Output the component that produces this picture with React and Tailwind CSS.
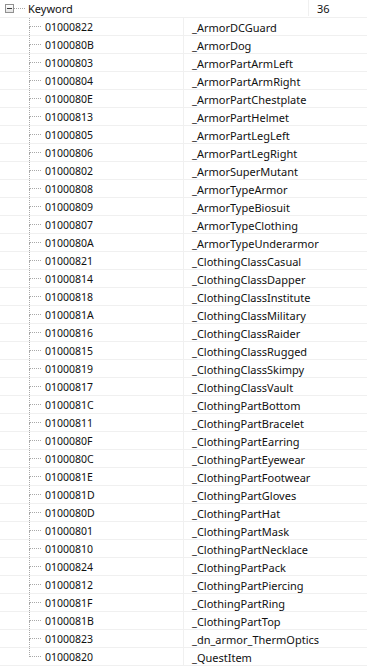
import React from 'react';

const KEYWORDS = [
  ['01000822', '_ArmorDCGuard'],
  ['0100080B', '_ArmorDog'],
  ['01000803', '_ArmorPartArmLeft'],
  ['01000804', '_ArmorPartArmRight'],
  ['0100080E', '_ArmorPartChestplate'],
  ['01000813', '_ArmorPartHelmet'],
  ['01000805', '_ArmorPartLegLeft'],
  ['01000806', '_ArmorPartLegRight'],
  ['01000802', '_ArmorSuperMutant'],
  ['01000808', '_ArmorTypeArmor'],
  ['01000809', '_ArmorTypeBiosuit'],
  ['01000807', '_ArmorTypeClothing'],
  ['0100080A', '_ArmorTypeUnderarmor'],
  ['01000821', '_ClothingClassCasual'],
  ['01000814', '_ClothingClassDapper'],
  ['01000818', '_ClothingClassInstitute'],
  ['0100081A', '_ClothingClassMilitary'],
  ['01000816', '_ClothingClassRaider'],
  ['01000815', '_ClothingClassRugged'],
  ['01000819', '_ClothingClassSkimpy'],
  ['01000817', '_ClothingClassVault'],
  ['0100081C', '_ClothingPartBottom'],
  ['01000811', '_ClothingPartBracelet'],
  ['0100080F', '_ClothingPartEarring'],
  ['0100080C', '_ClothingPartEyewear'],
  ['0100081E', '_ClothingPartFootwear'],
  ['0100081D', '_ClothingPartGloves'],
  ['0100080D', '_ClothingPartHat'],
  ['01000801', '_ClothingPartMask'],
  ['01000810', '_ClothingPartNecklace'],
  ['01000824', '_ClothingPartPack'],
  ['01000812', '_ClothingPartPiercing'],
  ['0100081F', '_ClothingPartRing'],
  ['0100081B', '_ClothingPartTop'],
  ['01000823', '_dn_armor_ThermOptics'],
  ['01000820', '_QuestItem'],
];

function Row({ id, name, last }) {
  return (
    <div className="flex h-[18px] border-b border-[#f0f0f0]">
      <div className="w-[29px] shrink-0" />
      {/* tree connector */}
      <div className="w-[12px] shrink-0 flex flex-col">
        <div className="h-[9px] border-l border-b border-dotted border-[#a8a8a8]" />
        {!last && <div className="flex-1 border-l border-dotted border-[#a8a8a8]" />}
      </div>
      <div className="w-[142px] shrink-0 pl-[4px] pt-[2px] flex items-center text-[10.5px]">{id}</div>
      <div className="flex-1 border-l border-[#f0f0f0] pl-[8px] pt-[2px] flex items-center">{name}</div>
    </div>
  );
}

export default function App() {
  return (
    <div className="w-[367px] h-[667px] overflow-hidden bg-white text-[#111] text-[11px] leading-none font-['Noto_Sans',sans-serif]">
      <div className="flex h-[18px] border-b border-[#f0f0f0]">
        <div className="w-[183px] shrink-0 flex items-start">
          <div className="ml-[5px] mt-[4px] w-[9px] h-[9px] border border-[#919191] bg-gradient-to-b from-white to-[#e4e4e4] flex items-center justify-center">
            <div className="w-[5px] h-px bg-[#3c3c3c]" />
          </div>
          <div className="mt-[8px] w-[11px] border-t border-dotted border-[#a8a8a8]" />
          <div className="ml-[3px] pt-[3px]">Keyword</div>
        </div>
        <div className="w-[125px] shrink-0" />
        <div className="flex-1 h-[16px] border-l border-[#f0f0f0] pl-[8px] pt-[3px]">36</div>
      </div>
      {KEYWORDS.map(([id, name], i) => (
        <Row key={id} id={id} name={name} last={i === KEYWORDS.length - 1} />
      ))}
    </div>
  );
}
